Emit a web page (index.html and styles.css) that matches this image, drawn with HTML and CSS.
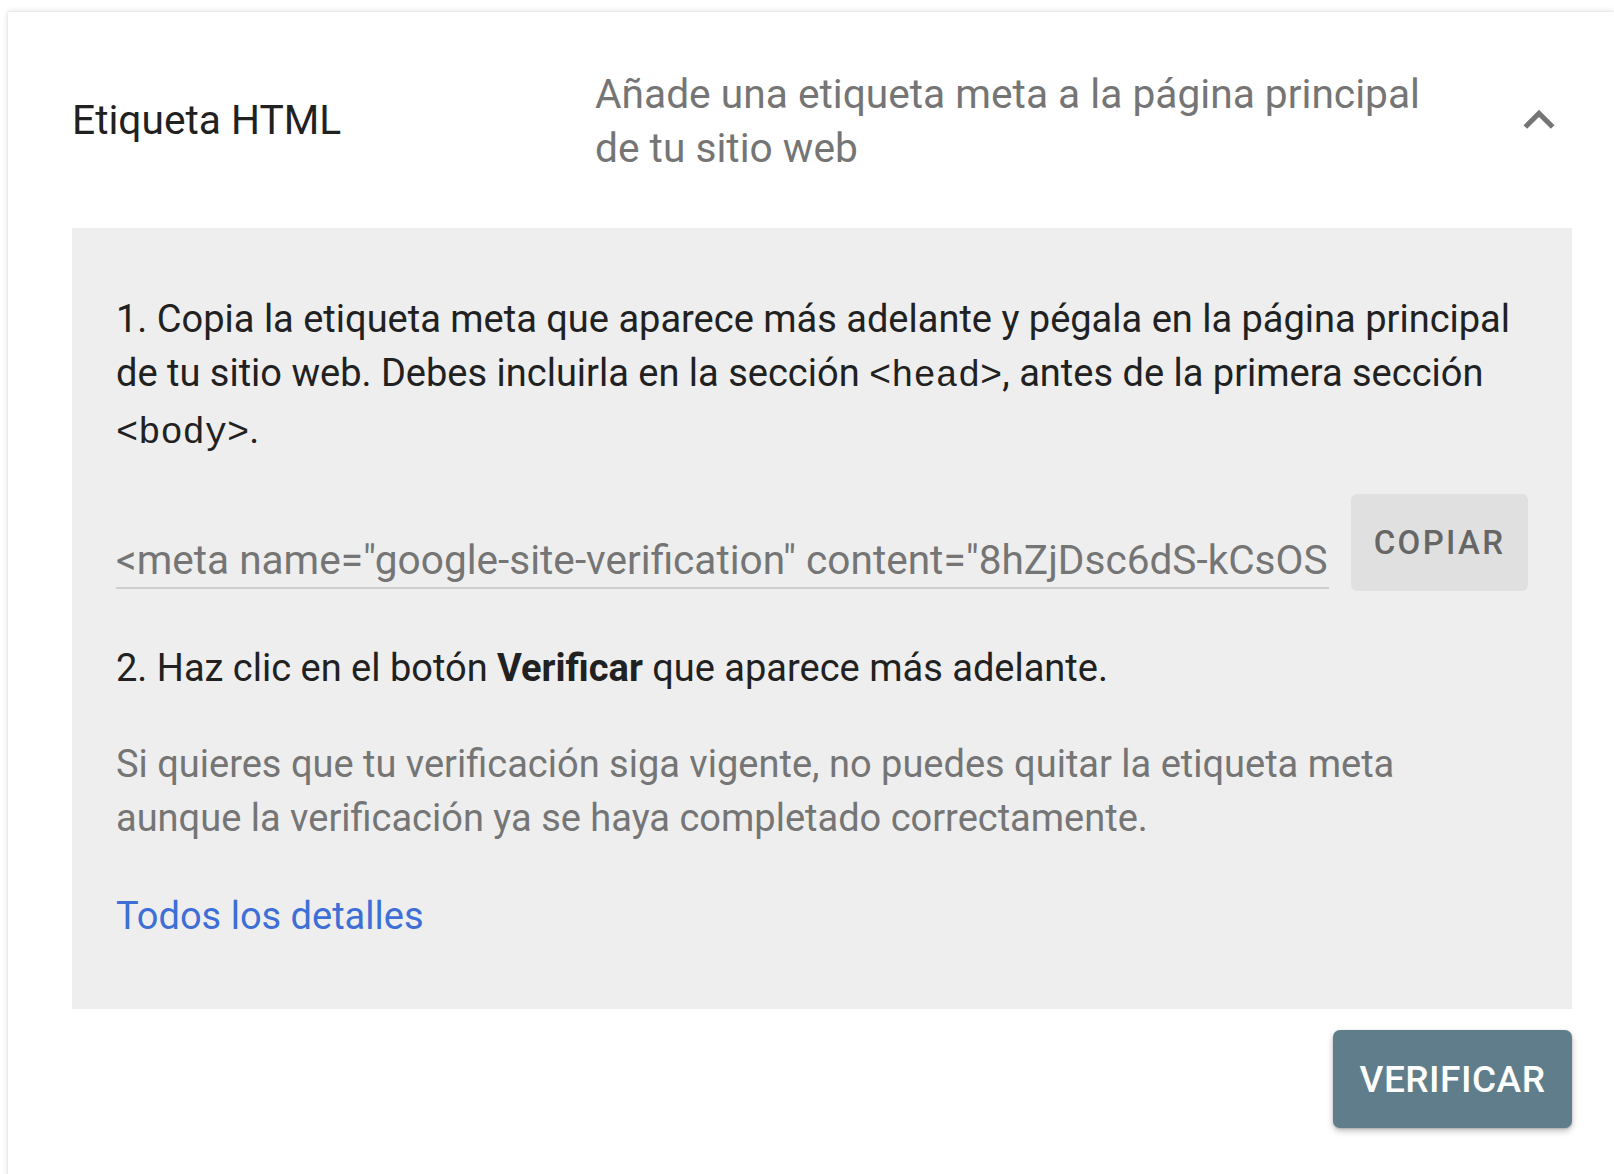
FILE: index.html
```html
<!DOCTYPE html>
<html lang="es">
<head>
<meta charset="utf-8">
<title>Etiqueta HTML</title>
<link rel="stylesheet" href="styles.css">
</head>
<body>
<div class="card">
  <div class="header">
    <div class="title">Etiqueta HTML</div>
    <div class="desc">Añade una etiqueta meta a la página principal de tu sitio web</div>
    <svg class="chevron" viewBox="0 0 24 24" width="62" height="62" aria-hidden="true"><path d="M12 8l-6 6 1.41 1.41L12 10.83l4.59 4.58L18 14z" fill="#757575"/></svg>
  </div>
  <div class="panel">
    <p class="step1">1. Copia la etiqueta meta que aparece más adelante y pégala en la página principal de tu sitio web. Debes incluirla en la sección <code>&lt;head&gt;</code>, antes de la primera sección <code>&lt;body&gt;</code>.</p>
    <div class="meta-row">
      <div class="meta-field">&lt;meta name="google-site-verification" content="8hZjDsc6dS-kCsOS</div>
      <button class="copy-btn">COPIAR</button>
    </div>
    <p class="step2">2. Haz clic en el botón <b>Verificar</b> que aparece más adelante.</p>
    <p class="note">Si quieres que tu verificación siga vigente, no puedes quitar la etiqueta meta aunque la verificación ya se haya completado correctamente.</p>
    <a class="details" href="#">Todos los detalles</a>
  </div>
  <div class="actions">
    <button class="verify-btn">VERIFICAR</button>
  </div>
</div>
</body>
</html>
```
FILE: styles.css
```css
html, body {
  margin: 0;
  padding: 0;
  background: #ffffff;
  overflow: hidden;
  height: 1174px;
}
body {
  font-family: Roboto, "Liberation Sans", sans-serif;
}
.card {
  margin: 12px 0 0 8px;
  background: #ffffff;
  box-shadow: 0 0 6px rgba(0, 0, 0, 0.16), 0 0 1px rgba(0, 0, 0, 0.1);
  padding: 0 42px 80px 64px;
  min-height: 1300px;
}
.header {
  display: flex;
  align-items: center;
  height: 216px;
}
.title {
  width: 523px;
  flex: none;
  font-size: 40.7px;
  line-height: 54px;
  color: #212121;
}
.desc {
  width: 870px;
  flex: none;
  font-size: 40.7px;
  line-height: 54px;
  color: #757575;
  margin-top: 1px;
}
.chevron {
  margin-left: auto;
  margin-right: 2px;
  flex: none;
}
.panel {
  background: #eeeeee;
  padding: 64px 44px 66px 44px;
  display: flex;
  flex-direction: column;
  align-items: flex-start;
}
.panel p {
  margin: 0;
  font-size: 38px;
  line-height: 54px;
}
.step1, .step2 {
  color: #212121;
}
code {
  font-family: "Liberation Mono", "DejaVu Sans Mono", monospace;
  font-size: 37px;
}
.meta-row {
  margin-top: 34px;
  display: flex;
  align-items: flex-end;
  gap: 22px;
  align-self: stretch;
}
.meta-field {
  flex: 1;
  min-width: 0;
  overflow: hidden;
  white-space: nowrap;
  font-size: 40.6px;
  line-height: 54px;
  color: #757575;
  padding-bottom: 0;
  border-bottom: 2px solid #cfcfcf;
  margin-bottom: 2px;
}
.copy-btn {
  flex: none;
  width: 177px;
  height: 97px;
  border: none;
  border-radius: 6px;
  background: #e0e0e0;
  color: #666666;
  font-family: Roboto, "Liberation Sans", sans-serif;
  font-weight: 500;
  font-size: 33px;
  letter-spacing: 2.3px;
  padding: 0;
}
.step2 {
  margin-top: 50px !important;
}
.step2 b {
  font-weight: 700;
}
.note {
  margin-top: 42px !important;
  color: #757575;
}
.details {
  margin-top: 44px;
  font-size: 38px;
  line-height: 54px;
  color: #3d6fd6;
  text-decoration: none;
}
.actions {
  display: flex;
  justify-content: flex-end;
  padding-top: 21px;
}
.verify-btn {
  width: 239px;
  height: 98px;
  border: none;
  border-radius: 7px;
  background: #607d8b;
  color: #ffffff;
  font-family: Roboto, "Liberation Sans", sans-serif;
  font-weight: 500;
  font-size: 37px;
  letter-spacing: 0.5px;
  padding: 0;
  box-shadow: 0 3px 6px rgba(0, 0, 0, 0.25), 0 1px 2px rgba(0, 0, 0, 0.15);
}
```
